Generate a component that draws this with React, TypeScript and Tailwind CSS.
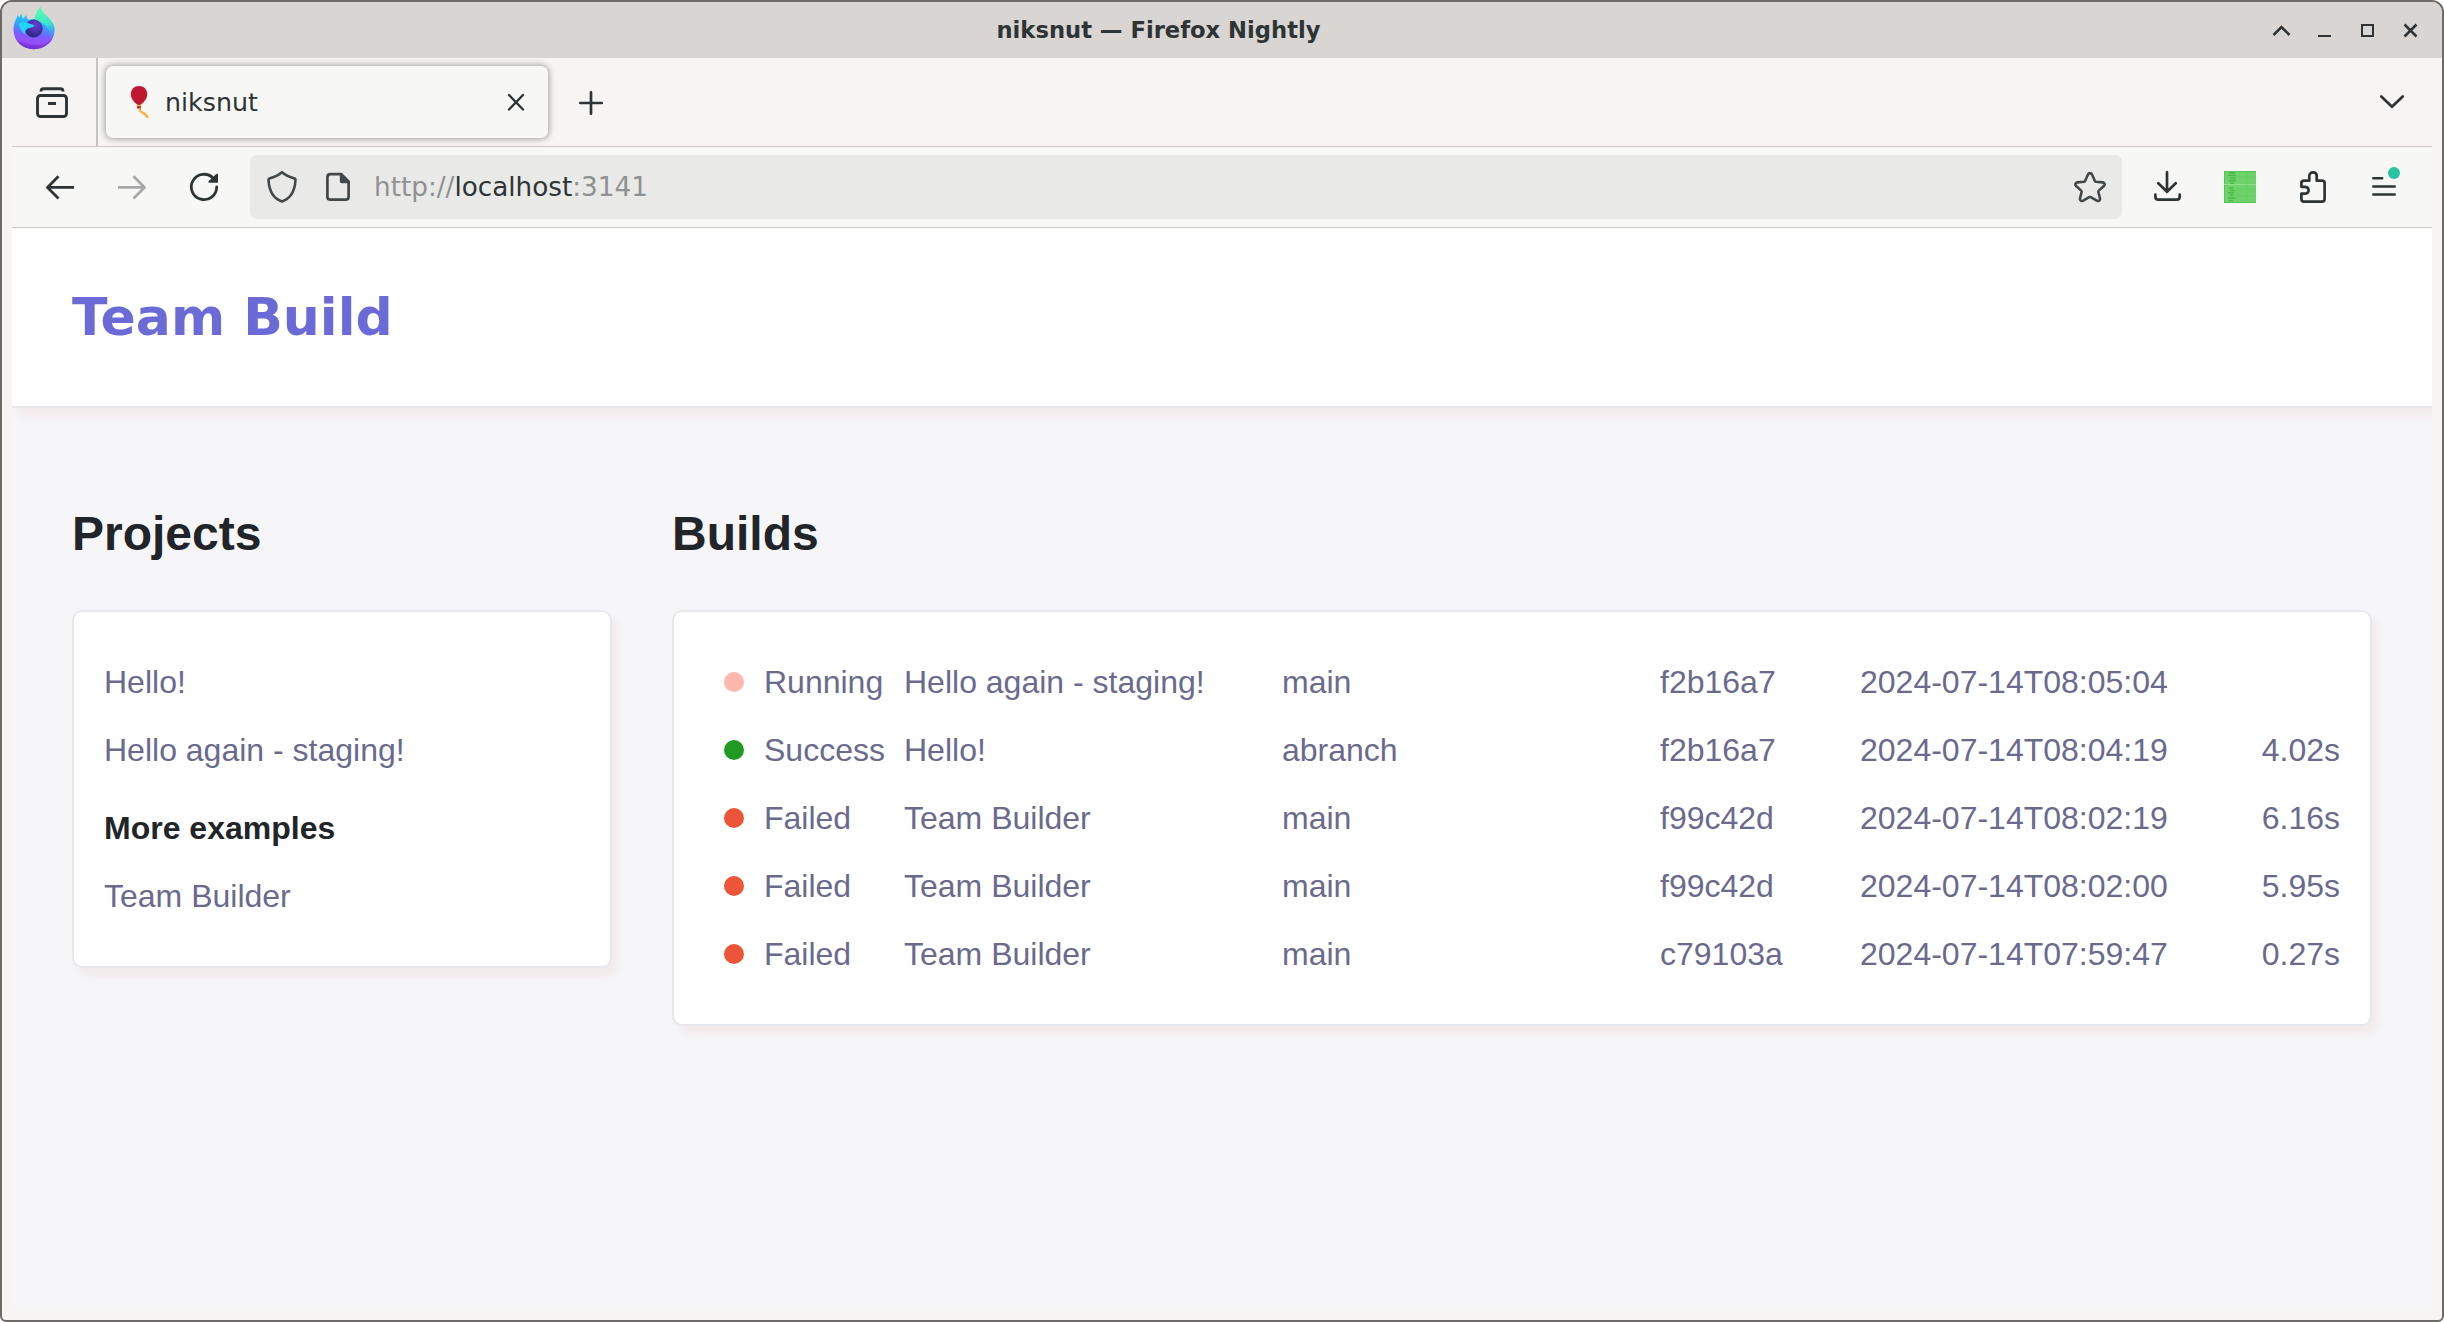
import React from "react";

const ink = "#2e3436";

function Firefox() {
  return (
    <svg width="44" height="44" viewBox="0 0 44 44" className="shrink-0 overflow-visible">
      <defs>
        <linearGradient id="body" x1="0.6" y1="0" x2="0.45" y2="1">
          <stop offset="0.1" stopColor="#30dce0" />
          <stop offset="0.38" stopColor="#22b4ff" />
          <stop offset="0.68" stopColor="#7c5cff" />
          <stop offset="0.85" stopColor="#9a4cff" />
          <stop offset="1" stopColor="#7a35d8" />
        </linearGradient>
        <linearGradient id="flame" x1="0.4" y1="0" x2="0.6" y2="1">
          <stop offset="0" stopColor="#54ffb0" />
          <stop offset="0.5" stopColor="#3ee8c8" />
          <stop offset="1" stopColor="#4c8cff" stopOpacity="0" />
        </linearGradient>
        <radialGradient id="globe" cx="0.6" cy="0.3" r="0.7">
          <stop offset="0" stopColor="#6a40d8" />
          <stop offset="1" stopColor="#2c2480" />
        </radialGradient>
      </defs>
      <path d="M9.800 5.500C9.800 7.500 10 9 10.800 10.500L14.500 7C14.500 9 15 10.500 16 11.500L23 11C23.500 6 25.500 2 28.500 -1C29.500 4.500 33 6 36 9.500C40 13.500 43 17 42.500 23C42 33 33.500 41.200 22 41.200C10 41.200 1.500 32.500 1.500 21.500C1.500 14 5 10.500 5.800 7C6.500 8 7 8.800 7.300 9.500C8 8 8.800 6.500 9.800 5.500Z" fill="url(#body)" />
      <path d="M28.500 -1C29.500 4.500 33 6 36 9.500C40 13.500 43 17 42.500 23C42.200 27.500 40 31 37 33C38.500 27 37.500 20 31.500 16C28 13.500 24 13 22.500 12C23 7 25 2 28.500 -1Z" fill="url(#flame)" />
      <path d="M3 29C9 38 28 41 40.500 31C37 37 30 41.200 22 41.200C13 41.200 6 36.500 3 29Z" fill="#6a2cc8" opacity="0.5" />
      <circle cx="21.700" cy="20.500" r="9" fill="url(#globe)" />
      <path d="M6.500 16C9 14 14 13.500 17 15.500C19 16.500 21.500 16.500 22.500 17.500C21.500 19.800 17.500 19.500 15.500 20.500C13.500 22 12.500 24 13.500 27C9.500 24 8 20 6.500 16Z" fill="#20d8f4" />
    </svg>
  );
}

function Icon({ size = 32, color = ink, w = 2, children, className = "" }: any) {
  return (
    <svg width={size} height={size} viewBox={`0 0 ${size} ${size}`} fill="none" stroke={color} strokeWidth={w} strokeLinecap="round" strokeLinejoin="round" className={`shrink-0 ${className}`}>
      {children}
    </svg>
  );
}

function TitleBar() {
  return (
    <div className="flex h-14 shrink-0 items-center bg-[#d9d5d2] pl-[10px] pr-4">
      <div className="flex w-10"><Firefox /></div>
      <div className="flex-1 text-center font-['DejaVu_Sans'] text-[22.667px] font-bold leading-none text-[#2e3436]">niksnut — Firefox Nightly</div>
      <div className="flex w-[161px] justify-end gap-[11px]">
        <Icon w={2.600}><path strokeLinecap="butt" strokeLinejoin="miter" d="M8.500 21L16.500 13L24.500 21" /></Icon>
        <Icon w={2}><path strokeLinecap="butt" d="M10 22H23" /></Icon>
        <Icon w={2}><path strokeLinejoin="miter" d="M11 11H22V22H11Z" /></Icon>
        <Icon w={2.600}><path strokeLinecap="butt" d="M10.500 10.500L22.500 22.500M22.500 10.500L10.500 22.500" /></Icon>
      </div>
    </div>
  );
}

function TabStrip() {
  return (
    <div className="flex h-[88px] shrink-0 pr-6">
      <div className="flex w-[84px] items-center pl-6">
        <Icon w={2.900}>
          <path strokeLinecap="butt" d="M5 5.500C5 3.500 6 2.700 7.500 2.700H24.500C26 2.700 27 3.500 27 5.500" />
          <rect x="1.500" y="9.500" width="29" height="21" rx="3" />
          <path strokeLinecap="butt" d="M12 17.500H20" />
        </Icon>
      </div>
      <div className="w-[2px] bg-[#c3c3c0]" />
      <div className="ml-2 mt-2 flex h-[72px] w-[442px] items-center rounded-[7px] bg-[#f7f7f5] shadow-[0_0_6px_1px_rgba(0,0,0,0.35)]">
        <svg width="32" height="32" viewBox="0 0 32 32" className="ml-[18px] shrink-0">
          <path d="M15 0C10.300 0 6.800 3.500 6.800 8.300C6.800 13.200 10.800 16.800 13.500 19H16.500C19.200 16.800 23.200 13.200 23.200 8.300C23.200 3.500 19.700 0 15 0Z" fill="#be1931" />
          <path d="M13.200 20H16.800L17 22.500H13Z" fill="#be1931" />
          <path d="M12.800 19.400H17.200" stroke="#ffac33" strokeWidth="1.500" />
          <path d="M15.500 22.500C16 28.500 22.500 25.500 23.500 32" stroke="#ffac33" strokeWidth="2.200" fill="none" />
        </svg>
        <span className="ml-[9px] flex-1 pt-px font-['DejaVu_Sans'] text-[25.300px] text-[#2e3436]">niksnut</span>
        <Icon w={2.400} className="mr-4"><path d="M9 9L23 23.500M23 9L9 23.500" /></Icon>
      </div>
      <div className="flex flex-1 items-center justify-between pl-[27px]">
        <Icon w={2.700}><path d="M5.300 17H26.700M16 6.300V27.700" /></Icon>
        <Icon w={2.700}><path d="M5.300 10.500L16 20.800L26.700 10.500" /></Icon>
      </div>
    </div>
  );
}

function NavBar() {
  return (
    <div className="flex h-[82px] shrink-0 items-center border-y border-t-[#d0c8bf] border-b-[#c8c8c4] bg-[#f7f7f5]">
      <Icon w={2.800} className="ml-8"><path strokeLinecap="butt" d="M14.500 5.300L3.500 16.400L14.500 27.500M4 16.400H30" /></Icon>
      <Icon w={2.800} color="#a7a9a8" className="ml-10"><path strokeLinecap="butt" d="M17.500 5.300L28.500 16.400L17.500 27.500M2 16.400H28" /></Icon>
      <Icon w={2.800} className="ml-10">
        <path d="M25 7A12.700 12.700 0 1 0 28.700 16" />
        <path d="M30 3V11.700H21.500C20.300 11.700 20 10.800 20.800 10L28 3.300C28.800 2.600 29.500 2.600 30 3Z" fill={ink} stroke="none" />
      </Icon>
      <div className="ml-[30px] flex h-16 flex-1 items-center rounded-[7px] bg-[#e9e9e7]">
        <Icon w={2.600} color="#42474a" className="ml-4">
          <path d="M16 1.200C12.500 4.200 7.500 6.300 3.300 7.500C2.700 7.700 2.500 8 2.500 8.800C3 19 7 27.500 16 30.500C25 27.500 29 19 29.500 8.800C29.500 8 29.300 7.700 28.700 7.500C24.500 6.300 19.500 4.200 16 1.200Z" />
        </Icon>
        <Icon w={2.700} color="#42474a" className="ml-6">
          <path d="M19 3.200H8.500C6.500 3.200 5.400 4.200 5.400 6.200V25.700C5.400 27.700 6.500 28.700 8.500 28.700H23.500C25.500 28.700 26.600 27.700 26.600 25.700V11.500" />
          <path d="M17.800 2H20L28 10V12.200H20C18.500 12.200 17.800 11.500 17.800 10Z" fill="#42474a" stroke="none" />
        </Icon>
        <span className="ml-5 flex-1 pt-[2px] font-['DejaVu_Sans'] text-[26.250px] text-[#8f9192]">http://<span className="text-[#2e3436]">localhost</span>:3141</span>
        <Icon w={2.600} color="#42474a" className="mr-4">
          <path d="M14 3.500C14.800 1.700 17.200 1.700 18 3.500L20.800 9.800C21 10.300 21.400 10.600 22 10.700L28.700 11.400C30.700 11.700 31.300 13.700 29.900 15L25 19.400C24.500 19.800 24.300 20.300 24.400 21L26 27.500C26.300 29.500 24.500 30.600 22.800 29.700L16.800 26.200C16.300 25.900 15.700 25.900 15.200 26.200L9.200 29.700C7.500 30.600 5.700 29.500 6 27.500L7.600 21C7.700 20.300 7.500 19.800 7 19.400L2.100 15C0.700 13.700 1.300 11.700 3.300 11.400L10 10.700C10.600 10.600 11 10.300 11.200 9.800Z" />
        </Icon>
      </div>
      <Icon w={2.700} className="ml-[30px]"><path d="M15 1.300V21M6.300 12.300L15 20.800L23.700 12.300M3.400 23.500V25.700C3.400 27.700 4.400 28.700 6.400 28.700H24.700C26.700 28.700 27.700 27.700 27.700 25.700V23.500" /></Icon>
      <svg width="32" height="32" viewBox="0 0 32 32" className="ml-10 shrink-0">
        <rect width="32" height="32" fill="#6ed26a" />
        <path d="M0 .5H32M.5 0V32M0 31.500H32" stroke="#59c558" />
        <path d="M5 2H11M4 4.500H12M6 7H11M5 9.500H12M6 12H10M5 17H9M6 19.500H11M4 22H10M6 24.500H9M4 27H11M5 29.500H9" stroke="#4fb74e" strokeWidth="1.600" />
        <path d="M0 13.500H32" stroke="#8be287" />
        <path d="M12 6H30M12 19H30M12 25H30M23 1V31" stroke="#65ca61" strokeWidth=".7" />
      </svg>
      <Icon w={2.700} className="ml-[42px]">
        <path d="M3.400 15.800V12C3.400 10.300 4.300 9.700 6 9.700H11.300V5C11.300 2.800 12.800 1.400 15 1.400S18.700 2.800 18.700 5V9.700H24C25.700 9.700 26.600 10.300 26.600 12V28C26.600 29.900 25.700 30.600 24 30.600H6C4.300 30.600 3.400 29.900 3.400 28V22.600H6.500C9.300 22.600 10.600 21.300 10.600 19.200S9.300 15.800 6.500 15.800Z" />
      </Icon>
      <div className="relative ml-[38px] mr-8 h-8 w-8">
        <Icon w={2.500}><path d="M5.300 7.200H14.200M5.300 15.400H26.700M5.300 23.400H26.700" /></Icon>
        <span className="absolute -top-[4px] left-[20px] h-3 w-3 rounded-full bg-[#2ac3a2]" />
      </div>
    </div>
  );
}

const dot: Record<string, string> = {
  Running: "bg-[#fcb8ad]",
  Success: "bg-[#209a20]",
  Failed: "bg-[#ec5538]",
};

const builds = [
  ["Running", "Hello again - staging!", "main", "f2b16a7", "2024-07-14T08:05:04", ""],
  ["Success", "Hello!", "abranch", "f2b16a7", "2024-07-14T08:04:19", "4.02s"],
  ["Failed", "Team Builder", "main", "f99c42d", "2024-07-14T08:02:19", "6.16s"],
  ["Failed", "Team Builder", "main", "f99c42d", "2024-07-14T08:02:00", "5.95s"],
  ["Failed", "Team Builder", "main", "c79103a", "2024-07-14T07:59:47", "0.27s"],
];

function Card({ children, className = "" }: any) {
  return (
    <div className={`rounded-[10px] border-2 border-[#e7e7ee] bg-white shadow-[6px_8px_8px_#f2eaea] ${className}`}>
      {children}
    </div>
  );
}

function Page() {
  return (
    <div className="min-h-0 flex-1 overflow-hidden bg-[#f6f6f9] font-['Liberation_Sans'] text-[32px] leading-[48px] text-[#6a6a8e]">
      <header className="flex h-[180px] items-center border-b-2 border-[#e7e7ee] bg-white pl-[60px] shadow-[6px_8px_8px_#f2eaea]">
        <h1 className="font-['DejaVu_Sans'] text-[52px] font-bold leading-none text-[#6b6bd8]">Team Build</h1>
      </header>
      <main className="flex gap-[60px] px-[60px] pt-[97px]">
        <section className="w-[540px]">
          <h2 className="text-[48px] font-bold leading-[58px] text-[#212529]">Projects</h2>
          <Card className="mt-[47px] h-[358px] px-[30px] pt-[46px]">
            <p>Hello!</p>
            <p className="mt-5">Hello again - staging!</p>
            <h3 className="mt-[30px] font-bold text-[#212529]">More examples</h3>
            <p className="mt-5">Team Builder</p>
          </Card>
        </section>
        <section className="flex-1">
          <h2 className="text-[48px] font-bold leading-[58px] text-[#212529]">Builds</h2>
          <Card className="mt-[47px] flex h-[416px] flex-col gap-5 pl-[50px] pr-[30px] pt-[46px]">
            {builds.map(([status, project, branch, rev, time, took]) => (
              <div key={time} className="grid grid-cols-[40px_140px_378px_378px_200px_1fr_auto] items-center whitespace-nowrap">
                <span className={`h-5 w-5 rounded-full ${dot[status]}`} />
                <span>{status}</span>
                <span>{project}</span>
                <span>{branch}</span>
                <span>{rev}</span>
                <span>{time}</span>
                <span>{took}</span>
              </div>
            ))}
          </Card>
        </section>
      </main>
    </div>
  );
}

export default function App() {
  return (
    <div className="h-[1322px] w-[2444px] bg-white">
      <div className="flex h-full flex-col overflow-hidden rounded-t-[12px] rounded-b-[6px] border-2 border-[#6d6b68] bg-[#f6f5f3]">
        <TitleBar />
        <div className="flex min-h-0 flex-1 flex-col overflow-hidden px-[10px] pb-[10px]">
          <TabStrip />
          <NavBar />
          <Page />
        </div>
      </div>
    </div>
  );
}
